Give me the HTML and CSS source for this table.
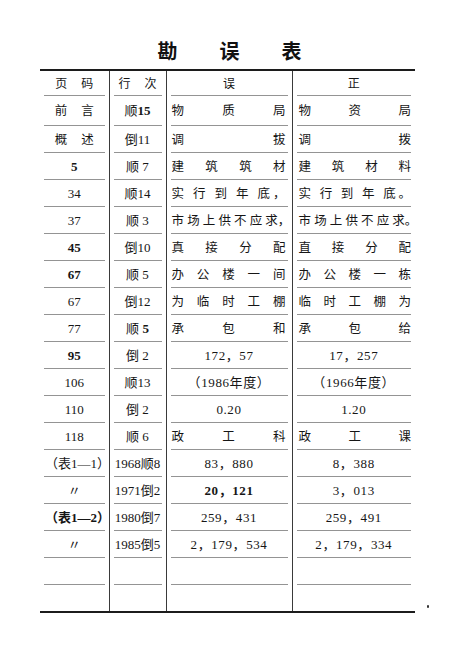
FILE: index.html
```html
<!DOCTYPE html>
<html lang="zh-CN">
<head>
<meta charset="utf-8">
<title>勘误表</title>
<link rel="stylesheet" href="styles.css">
</head>
<body>
<div class="page">
  <h1 class="title">勘误表</h1>
  <div class="sheet">
    <table class="errata">
      <colgroup>
        <col class="c-page"><col class="c-line"><col class="c-wrong"><col class="c-right">
      </colgroup>
      <thead>
        <tr class="head">
          <th class="sp">页 码</th>
          <th class="sp">行 次</th>
          <th>误</th>
          <th>正</th>
        </tr>
      </thead>
      <tbody>
        <tr><td class="sp">前 言</td><td>顺<b>15</b></td><td class="jt">物 质 局</td><td class="jt">物 资 局</td></tr>
        <tr><td class="sp">概 述</td><td>倒11</td><td class="jt">调 拔</td><td class="jt">调 拨</td></tr>
        <tr><td class="b">5</td><td>顺 7</td><td class="jt">建 筑 筑 材</td><td class="jt">建 筑 材 料</td></tr>
        <tr><td>34</td><td>顺14</td><td class="jt">实 行 到 年 底，</td><td class="jt">实 行 到 年 底。</td></tr>
        <tr><td>37</td><td>顺 3</td><td class="jt">市 场 上 供 不 应 求，</td><td class="jt over">市 场 上 供 不 应 求。</td></tr>
        <tr><td class="b">45</td><td>倒10</td><td class="jt">真 接 分 配</td><td class="jt">直 接 分 配</td></tr>
        <tr><td class="b">67</td><td>顺 5</td><td class="jt">办 公 楼 一 间</td><td class="jt">办 公 楼 一 栋</td></tr>
        <tr><td>67</td><td>倒12</td><td class="jt">为 临 时 工 棚</td><td class="jt">临 时 工 棚 为</td></tr>
        <tr><td>77</td><td>顺 <b>5</b></td><td class="jt">承 包 和</td><td class="jt">承 包 给</td></tr>
        <tr><td class="b">95</td><td>倒 2</td><td class="num">172，57</td><td class="num">17，257</td></tr>
        <tr><td>106</td><td>顺13</td><td class="num">（1986年度）</td><td class="num">（1966年度）</td></tr>
        <tr><td>110</td><td>倒 2</td><td class="num">0.20</td><td class="num">1.20</td></tr>
        <tr><td>118</td><td>顺 6</td><td class="jt">政 工 科</td><td class="jt">政 工 课</td></tr>
        <tr><td>（表1—1）</td><td>1968顺8</td><td class="num">83，880</td><td class="num">8，388</td></tr>
        <tr><td>〃</td><td>1971倒2</td><td class="num b">20，121</td><td class="num">3，013</td></tr>
        <tr><td class="b">（表1—2）</td><td>1980倒7</td><td class="num">259，431</td><td class="num">259，491</td></tr>
        <tr><td>〃</td><td>1985倒5</td><td class="num">2，179，534</td><td class="num">2，179，334</td></tr>
        <tr><td></td><td></td><td></td><td></td></tr>
        <tr class="last"><td></td><td></td><td></td><td></td></tr>
      </tbody>
    </table>
    <span class="speck"></span>
  </div>
</div>
</body>
</html>
```

FILE: styles.css
```css
html, body {
  margin: 0;
  padding: 0;
  background: #ffffff;
}

body {
  width: 450px;
  height: 657px;
  overflow: hidden;
  color: #141414;
  font-family: "Liberation Serif", "Noto Sans CJK SC", serif;
}

.page {
  padding-top: 38px;
}

.title {
  margin: 0 0 6px 40px;
  width: 375px;
  height: 25px;
  padding-left: 46px;
  box-sizing: border-box;
  text-align: center;
  font-family: "Noto Sans CJK SC", sans-serif;
  font-size: 20px;
  line-height: 25px;
  font-weight: 700;
  letter-spacing: 42px;
  color: #111;
}

.sheet {
  display: flex;
  align-items: flex-end;
  margin-left: 40px;
}

.errata {
  border-collapse: collapse;
  table-layout: fixed;
  width: 375px;
  border-top: 2px solid #1c1c1c;
  border-bottom: 2px solid #1c1c1c;
}

.c-page { width: 69px; }
.c-line { width: 57px; }
.c-wrong { width: 126px; }
.c-right { width: 123px; }

.errata th,
.errata td {
  height: 27px;
  padding: 0 5px;
  box-sizing: border-box;
  text-align: center;
  vertical-align: middle;
  font-size: 13px;
  font-weight: 400;
  line-height: 16px;
  white-space: nowrap;
  font-family: "Liberation Serif", "Noto Sans CJK SC", serif;
  color: #161616;
  background-image: linear-gradient(#949494, #949494);
  background-repeat: no-repeat;
  background-position: center bottom;
  background-size: calc(100% - 8px) 1px;
}

.errata th:not(:last-child),
.errata td:not(:last-child) {
  border-right: 1px solid #3a3a3a;
}

.errata .head th {
  height: 26px;
  font-size: 12px;
}

.errata tbody tr:first-child td {
  height: 30px;
}

.errata .last td {
  background-image: none;
}

.errata .sp {
  font-size: 12.5px;
  word-spacing: 11px;
}

.errata .jt {
  font-size: 12.5px;
  text-align: justify;
  text-align-last: justify;
  padding: 0 6px 0 5px;
}

.errata td:last-child.jt {
  padding: 0 4px 0 6px;
}

.errata .over {
  padding-right: 0 !important;
}

.errata .num {
  letter-spacing: 0.6px;
}

.errata .b,
.errata b {
  font-weight: 700;
}

.speck {
  width: 2px;
  height: 3px;
  margin: 0 0 5px 12px;
  background: #333;
  border-radius: 1px;
}
```
